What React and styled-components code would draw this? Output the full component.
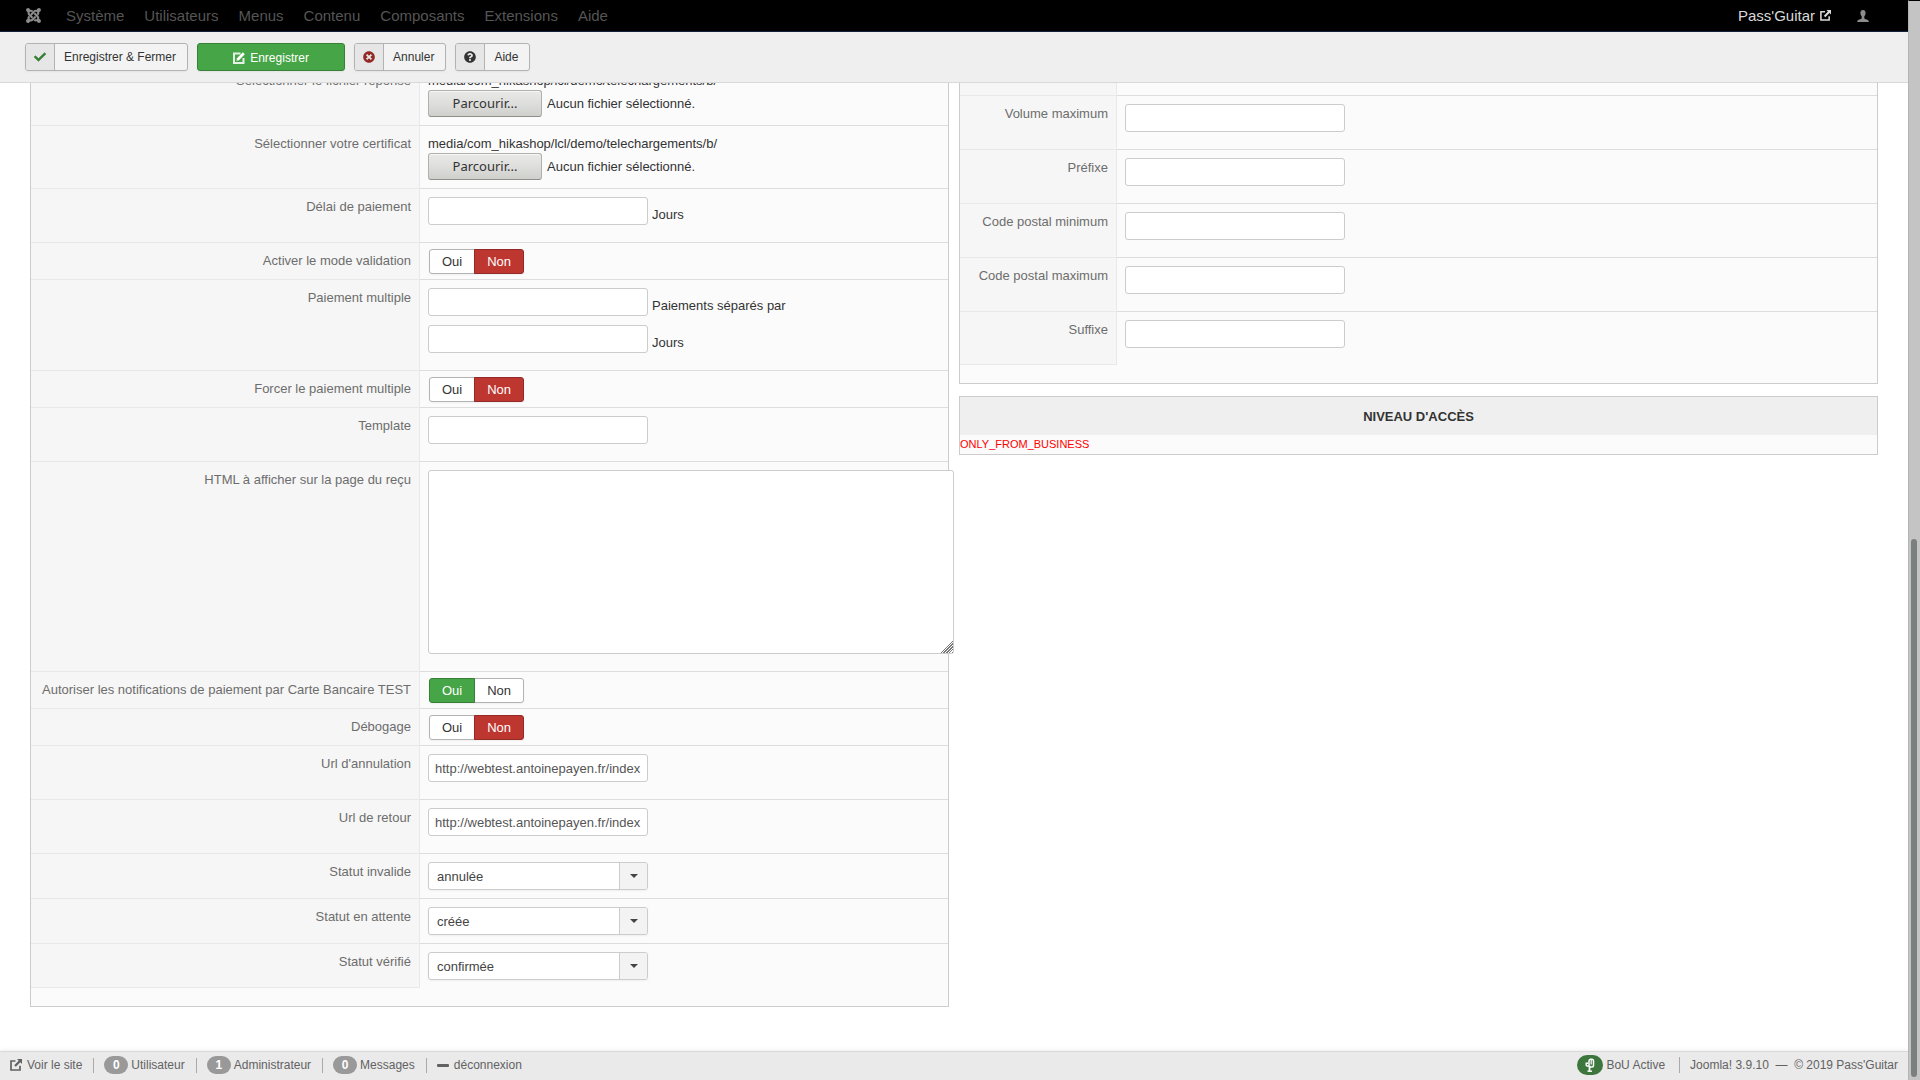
import React from "react";
import styled, { createGlobalStyle } from "styled-components";
import { FaJoomla, FaCheck, FaTimesCircle, FaQuestionCircle } from "react-icons/fa";

const GlobalStyle = createGlobalStyle`
  *, *::before, *::after { box-sizing: border-box; }
  body {
    margin: 0;
    font-family: "Liberation Sans", Arial, sans-serif;
    font-size: 13px;
    line-height: 18px;
    color: #333;
    background: #fff;
  }
  button, input, select, textarea { font: inherit; color: inherit; margin: 0; }
`;

const Screen = styled.div`
  display: flex;
  height: 100vh;
  overflow: hidden;
`;

const Page = styled.div`
  display: flex;
  flex-direction: column;
  flex: 1;
  min-width: 0;
`;

const ScrollTrack = styled.div`
  display: flex;
  flex-direction: column;
  justify-content: flex-end;
  width: 12px;
  padding: 0 3px 3px 2px;
  background: #c4c4c4;
  border-top: 1px solid #000;
  border-left: 1px solid #b4b4b4;
`;

const ScrollThumb = styled.div`
  width: 6px;
  height: 50%;
  border-radius: 3px;
  background: #7b7f7e;
`;

const Navbar = styled.header`
  display: flex;
  align-items: center;
  flex: none;
  height: 32px;
  padding: 0 39px 0 25px;
  background: #000;
  border-bottom: 1px solid #10223e;
  color: #8c8c8c;
  font-size: 15px;
`;

const NavMenu = styled.nav`
  display: flex;
  gap: 20px;
  margin-left: 24px;
`;

const NavLink = styled.a`
  color: #555;
  text-decoration: none;
`;

const SiteLink = styled.a`
  display: flex;
  align-items: center;
  gap: 5px;
  margin-left: auto;
  margin-right: 26px;
  color: #d9d9d9;
  text-decoration: none;
  font-size: 15px;
`;

const Toolbar = styled.div`
  display: flex;
  align-items: flex-start;
  gap: 9px;
  flex: none;
  height: 51px;
  padding: 11px 25px 0;
  background: #efefef;
  border-bottom: 1px solid #d9d9d9;
`;

const ToolButton = styled.button`
  display: flex;
  align-items: stretch;
  height: 28px;
  padding: 0 11px 0 0;
  border: 1px solid #b3b3b3;
  border-radius: 3px;
  background: #f3f3f3;
  box-shadow: 0 1px 2px rgba(0, 0, 0, 0.05);
  color: #333;
  font-size: 12px;
  line-height: 27px;
  overflow: hidden;
`;

const ToolIcon = styled.span`
  display: flex;
  align-items: center;
  justify-content: center;
  width: 29px;
  margin-right: 9px;
  background: #e6e6e6;
  border-right: 1px solid #b3b3b3;
  color: ${(p) => p.$color};
`;

const SaveButton = styled.button`
  display: flex;
  align-items: center;
  justify-content: center;
  gap: 5px;
  width: 148px;
  height: 28px;
  padding: 1px 6px 0;
  border: 1px solid #378137;
  border-radius: 3px;
  background: #46a546;
  box-shadow: 0 1px 2px rgba(0, 0, 0, 0.05);
  color: #fff;
  font-size: 12px;
`;

const Main = styled.main`
  flex: 1;
  min-height: 0;
  overflow: hidden;
  padding: 0 30px;
`;

const Columns = styled.div`
  display: grid;
  grid-template-columns: 1fr 1fr;
  gap: 10px;
  align-items: start;
`;

const Column = styled.div`
  display: flex;
  flex-direction: column;
  gap: 12px;
  min-width: 0;
  margin-top: -${(p) => p.$scrolled}px;
`;

const Panel = styled.section`
  border: 1px solid #ccc;
  border-top-width: ${(p) => (p.$open ? 0 : 1)}px;
  background: #fbfbfb;
  padding-bottom: ${(p) => (p.$open ? 18 : 0)}px;
`;

const PanelTitle = styled.h2`
  margin: 0;
  padding: 11px 10px 9px;
  background: #efefef;
  font-size: 13px;
  line-height: 18px;
  font-weight: bold;
  text-align: center;
  text-transform: uppercase;
`;

const Notice = styled.p`
  margin: 0;
  color: #f00;
  font-size: 11px;
  line-height: 19px;
`;

const FieldRow = styled.div`
  display: grid;
  grid-template-columns: ${(p) => p.$labelWidth}px 1fr;
`;

const FieldLabel = styled.div`
  padding: 9px 8px 0;
  background: #f6f6f6;
  border-top: 1px solid #e9e9e9;
  border-right: 1px solid #e9e9e9;
  color: #6d6d6d;
  text-align: right;
  ${FieldRow}:last-child > & { border-bottom: 1px solid #e9e9e9; }
`;

const FieldValue = styled.div`
  min-width: 0;
  padding: 8px;
  border-top: 1px solid #ddd;
`;

const InputLine = styled.div`
  display: flex;
  align-items: center;
  gap: 4px;
`;

const TextInput = styled.input`
  width: 220px;
  height: 28px;
  margin-bottom: 9px;
  padding: 4px 6px;
  border: 1px solid #ccc;
  border-radius: 3px;
  background: #fff;
  color: #555;
`;

const Suffix = styled.label`
  padding-bottom: 2px;
`;

const TextArea = styled.textarea`
  display: block;
  width: calc(100% + 14px);
  height: 184px;
  margin-bottom: 9px;
  padding: 4px 6px;
  border: 1px solid #ccc;
  border-radius: 3px;
  background: #fff;
  position: relative;
  &::-webkit-resizer {
    background:
      linear-gradient(135deg, #fff 58%, transparent 58%),
      repeating-linear-gradient(135deg, #777 0 1px, #fff 1px 2px);
  }
`;

const HiddenInput = styled.input`
  position: absolute;
  width: 1px;
  height: 1px;
  opacity: 0;
`;

const FilePath = styled.div`
  padding-top: 1px;
`;

const FilePicker = styled.label`
  display: flex;
  align-items: center;
  gap: 5px;
  height: 27px;
`;

const BrowseFace = styled.span`
  width: 114px;
  height: 27px;
  border: 1px solid #b0b0ac;
  border-bottom-color: #8f8f8a;
  border-radius: 3px;
  background: linear-gradient(#e9e9e7, #dededc 50%, #cfcfcc);
  box-shadow: inset 0 1px #f7f7f6;
  font-family: "Noto Sans", sans-serif;
  line-height: 25px;
  text-align: center;
`;

const ToggleGroup = styled.fieldset`
  display: flex;
  height: 25px;
  margin: -2px 0 -3px;
  padding: 0 0 0 1px;
  border: 0;
`;

const face = {
  off: "background: #fff; border-color: #b3b3b3; color: #333;",
  yes: "background: #46a546; border-color: #378137; color: #fff; z-index: 1;",
  no: "background: #bd362f; border-color: #942a25; color: #fff; z-index: 1;",
};

const ToggleOption = styled.label`
  position: relative;
  height: 25px;
  padding: 0 12px;
  border: 1px solid;
  line-height: 23px;
  box-shadow: 0 1px 2px rgba(0, 0, 0, 0.05);
  ${(p) => face[p.$face]}
  &:first-of-type { border-radius: 3px 0 0 3px; }
  &:last-of-type { border-radius: 0 3px 3px 0; margin-left: -1px; }
`;

const SelectBox = styled.div`
  display: grid;
  grid-template-columns: 1fr 28px;
  width: 220px;
  height: 28px;
  border: 1px solid #ccc;
  border-radius: 3px;
  background: #fff;
  box-shadow: 0 1px 2px rgba(0, 0, 0, 0.05);
  overflow: hidden;
`;

const Select = styled.select`
  grid-area: 1 / 1 / 2 / 3;
  appearance: none;
  border: 0;
  padding: 2px 36px 0 8px;
  background: transparent;
  color: #444;
`;

const SelectArrow = styled.span`
  grid-area: 1 / 2;
  display: flex;
  align-items: center;
  justify-content: center;
  border-left: 1px solid #ccc;
  background: #f3f3f3;
  pointer-events: none;
  &::after {
    content: "";
    border: 4px solid transparent;
    border-top-color: #444;
    border-bottom-width: 0;
  }
`;

const StatusBar = styled.footer`
  display: flex;
  align-items: center;
  flex: none;
  height: 29px;
  padding: 0 10px 2px;
  background: #eaeaea;
  border-top: 1px solid #d9d9d9;
  box-shadow: 0 -1px 4px rgba(0, 0, 0, 0.07);
  color: #626262;
  font-size: 12px;
  line-height: 15px;
`;

const StatusItem = styled.div`
  display: flex;
  align-items: center;
  gap: 3px;
  padding-right: 11px;
  & + & {
    padding-left: 10px;
    border-left: 1px solid #aaa;
  }
`;

const StatusLink = styled.a`
  display: flex;
  align-items: center;
  gap: 5px;
  color: inherit;
  text-decoration: none;
`;

const StatusEnd = styled.div`
  display: flex;
  margin-left: auto;
  ${StatusItem}:first-child { padding-right: 14px; }
  ${StatusItem}:last-child { padding-right: 0; }
`;

const Badge = styled.span`
  display: flex;
  align-items: center;
  justify-content: center;
  width: ${(p) => (p.$green ? 26 : 24)}px;
  height: ${(p) => (p.$green ? 20 : 18)}px;
  margin: -2px 0;
  border-radius: 10px;
  background: ${(p) => (p.$green ? "#3c763d" : "#999")};
  color: #fff;
  font-size: 12px;
  font-weight: bold;
`;

const Dash = styled.span`
  width: 12px;
  height: 3px;
  border-radius: 1px;
  background: #626262;
`;

const ExternalIcon = ({ size }) => (
  <svg width={size} height={size} viewBox="0 0 12 12" fill="none" aria-hidden="true">
    <path d="M5.500 2H1v9h9V6.800" stroke="currentColor" strokeWidth="1.700" />
    <path d="M7 0h5v5l-1.700-1.700-4.500 4.500-1.600-1.600 4.500-4.500z" fill="currentColor" />
  </svg>
);

const UserIcon = () => (
  <svg width="12" height="12" viewBox="0 0 12 12" fill="#8c8c8c" aria-hidden="true">
    <path d="M6 0C4.300 0 3.400 1.200 3.400 3c0 1.600.7 2.700 1.300 3.400v1.800C4.500 9 2.500 9.300 1.200 10 .5 10.400.3 11.200.2 12h11.600c-.1-.8-.3-1.600-1-2C9.500 9.300 7.500 9 7.300 8.200V6.400C7.900 5.700 8.600 4.600 8.600 3 8.600 1.200 7.700 0 6 0z" />
  </svg>
);

const EditIcon = () => (
  <svg width="12" height="12" viewBox="0 0 12 12" fill="none" aria-hidden="true">
    <path d="M7.500 1.500H1v9.500h9.500V6" stroke="#fff" strokeOpacity="0.85" strokeWidth="2" />
    <path d="M3.500 8.700l.5-2.500L9.800.3l2 2L6 8.200z" fill="#fff" />
  </svg>
);

const CactusIcon = () => (
  <svg width="10" height="14" viewBox="0 0 10 14" fill="none" stroke="#fff" aria-hidden="true">
    <path d="M4.500 13V7.500" strokeWidth="1.800" />
    <path d="M2.500 13.200h4.500" strokeWidth="1.400" />
    <path d="M4 8H2.200Q1.200 8 1.200 7V5.200h2" strokeWidth="1.400" />
    <path d="M4 7.500V3Q4 1.200 5.500 1.200H6.800Q8.500 1.200 8.500 3V7.500Q8.500 9 7 9H5" strokeWidth="1.500" />
    <path d="M6.200 2v4.500" strokeWidth="1.200" />
  </svg>
);

const Toggle = ({ name, value }) => (
  <ToggleGroup aria-label={name}>
    <ToggleOption $face={value ? "yes" : "off"}>
      <HiddenInput type="radio" name={name} defaultChecked={value} />
      Oui
    </ToggleOption>
    <ToggleOption $face={value ? "off" : "no"}>
      <HiddenInput type="radio" name={name} defaultChecked={!value} />
      Non
    </ToggleOption>
  </ToggleGroup>
);

const FileField = ({ id }) => (
  <>
    <FilePath>media/com_hikashop/lcl/demo/telechargements/b/</FilePath>
    <FilePicker>
      <HiddenInput type="file" id={id} />
      <BrowseFace>Parcourir...</BrowseFace>
      Aucun fichier sélectionné.
    </FilePicker>
  </>
);

const SelectField = ({ id, value }) => (
  <SelectBox>
    <Select id={id} defaultValue={value}>
      <option>{value}</option>
    </Select>
    <SelectArrow />
  </SelectBox>
);

const TextField = ({ id, value, suffix }) => (
  <InputLine>
    <TextInput id={id} type="text" defaultValue={value} />
    {suffix && <Suffix htmlFor={id}>{suffix}</Suffix>}
  </InputLine>
);

const Field = ({ id, label, labelWidth, group, children }) => (
  <FieldRow $labelWidth={labelWidth}>
    <FieldLabel>{group ? label : <label htmlFor={id}>{label}</label>}</FieldLabel>
    <FieldValue>{children}</FieldValue>
  </FieldRow>
);

const url = "http://webtest.antoinepayen.fr/index";

const paymentFields = [
  { id: "reponse", label: "Sélectionner le fichier réponse", kind: "file" },
  { id: "certificat", label: "Sélectionner votre certificat", kind: "file" },
  { id: "delai", label: "Délai de paiement", kind: "text", suffix: "Jours" },
  { id: "validation", label: "Activer le mode validation", kind: "toggle", value: false },
  { id: "multiple", label: "Paiement multiple", kind: "multiple" },
  { id: "forcer", label: "Forcer le paiement multiple", kind: "toggle", value: false },
  { id: "template", label: "Template", kind: "text" },
  { id: "html", label: "HTML à afficher sur la page du reçu", kind: "area" },
  { id: "test", label: "Autoriser les notifications de paiement par Carte Bancaire TEST", kind: "toggle", value: true },
  { id: "debug", label: "Débogage", kind: "toggle", value: false },
  { id: "annulation", label: "Url d'annulation", kind: "text", value: url },
  { id: "retour", label: "Url de retour", kind: "text", value: url },
  { id: "invalide", label: "Statut invalide", kind: "select", value: "annulée" },
  { id: "attente", label: "Statut en attente", kind: "select", value: "créée" },
  { id: "verifie", label: "Statut vérifié", kind: "select", value: "confirmée" },
];

const restrictionFields = [
  ["volmin", ""],
  ["volmax", "Volume maximum"],
  ["prefixe", "Préfixe"],
  ["cpmin", "Code postal minimum"],
  ["cpmax", "Code postal maximum"],
  ["suffixe", "Suffixe"],
];

const renderControl = (f) => {
  switch (f.kind) {
    case "file":
      return <FileField id={f.id} />;
    case "toggle":
      return <Toggle name={f.label} value={f.value} />;
    case "multiple":
      return (
        <>
          <TextField id={f.id} suffix="Paiements séparés par" />
          <TextField id={f.id + "-jours"} suffix="Jours" />
        </>
      );
    case "area":
      return <TextArea id={f.id} />;
    case "select":
      return <SelectField id={f.id} value={f.value} />;
    default:
      return <TextField id={f.id} value={f.value} suffix={f.suffix} />;
  }
};

const menus = ["Système", "Utilisateurs", "Menus", "Contenu", "Composants", "Extensions", "Aide"];

export default function App() {
  return (
    <Screen>
      <GlobalStyle />
      <Page>
        <Navbar>
          <FaJoomla size={17} />
          <NavMenu>
            {menus.map((m) => (
              <NavLink href="#" key={m}>{m}</NavLink>
            ))}
          </NavMenu>
          <SiteLink href="#">
            Pass'Guitar <ExternalIcon size={11} />
          </SiteLink>
          <UserIcon />
        </Navbar>
        <Toolbar>
          <ToolButton>
            <ToolIcon $color="#378137"><FaCheck size={12} /></ToolIcon>
            Enregistrer &amp; Fermer
          </ToolButton>
          <SaveButton>
            <EditIcon />
            Enregistrer
          </SaveButton>
          <ToolButton>
            <ToolIcon $color="#942a25"><FaTimesCircle size={12} /></ToolIcon>
            Annuler
          </ToolButton>
          <ToolButton>
            <ToolIcon $color="#333"><FaQuestionCircle size={12} /></ToolIcon>
            Aide
          </ToolButton>
        </Toolbar>
        <Main>
          <Columns>
            <Column $scrolled={21}>
              <Panel $open>
                {paymentFields.map((f) => (
                  <Field key={f.id} id={f.id} label={f.label} labelWidth={389} group={f.kind === "toggle"}>
                    {renderControl(f)}
                  </Field>
                ))}
              </Panel>
            </Column>
            <Column $scrolled={42}>
              <Panel $open>
                {restrictionFields.map(([id, label]) => (
                  <Field key={id} id={id} label={label} labelWidth={157}>
                    <TextField id={id} />
                  </Field>
                ))}
              </Panel>
              <Panel>
                <PanelTitle>Niveau d'accès</PanelTitle>
                <Notice>ONLY_FROM_BUSINESS</Notice>
              </Panel>
            </Column>
          </Columns>
        </Main>
        <StatusBar>
          <StatusItem>
            <StatusLink href="#"><ExternalIcon size={12} />Voir le site</StatusLink>
          </StatusItem>
          <StatusItem><Badge>0</Badge>Utilisateur</StatusItem>
          <StatusItem><Badge>1</Badge>Administrateur</StatusItem>
          <StatusItem><Badge>0</Badge>Messages</StatusItem>
          <StatusItem>
            <StatusLink href="#"><Dash />déconnexion</StatusLink>
          </StatusItem>
          <StatusEnd>
            <StatusItem><Badge $green><CactusIcon /></Badge>BoU Active</StatusItem>
            <StatusItem>Joomla! 3.9.10 &nbsp;—&nbsp; © 2019 Pass'Guitar</StatusItem>
          </StatusEnd>
        </StatusBar>
      </Page>
      <ScrollTrack>
        <ScrollThumb />
      </ScrollTrack>
    </Screen>
  );
}
